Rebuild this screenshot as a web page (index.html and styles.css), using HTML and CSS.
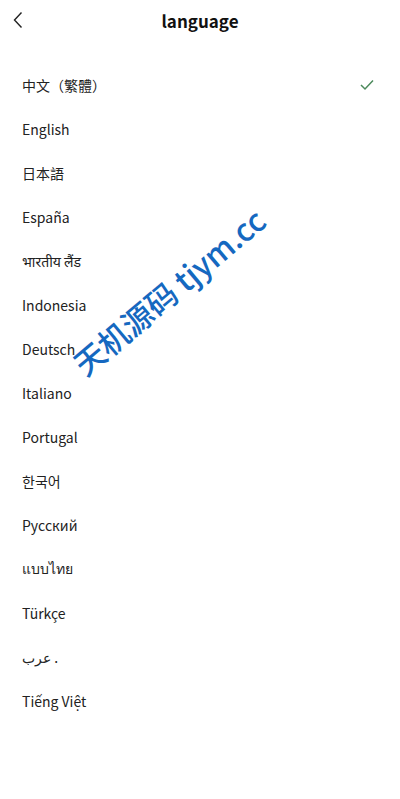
FILE: index.html
```html
<!DOCTYPE html>
<html lang="en">
<head>
    <meta charset="UTF-8">
    <meta name="viewport" content="width=device-width, initial-scale=1.0">
    <title>language</title>
    <link rel="stylesheet" href="styles.css">
</head>
<body>
    <div class="page">
        <div class="header">
            <span class="back">
                <svg width="12" height="18" viewBox="0 0 12 18"><path d="M9.5 1.5 L2.5 9 L9.5 16.5" fill="none" stroke="#222" stroke-width="1.4"/></svg>
            </span>
            <h2 class="title">language</h2>
        </div>

        <ul class="lang-list">
            <li class="lang-item active">
                <span>中文（繁體）</span>
                <svg class="check" width="14" height="12" viewBox="0 0 14 12"><path d="M1 6 L5 10 L13 1.5" fill="none" stroke="#4c8a5c" stroke-width="1.5"/></svg>
            </li>
            <li class="lang-item"><span>English</span></li>
            <li class="lang-item"><span>日本語</span></li>
            <li class="lang-item"><span>España</span></li>
            <li class="lang-item"><span>भारतीय लैंड</span></li>
            <li class="lang-item"><span>Indonesia</span></li>
            <li class="lang-item"><span>Deutsch</span></li>
            <li class="lang-item"><span>Italiano</span></li>
            <li class="lang-item"><span>Portugal</span></li>
            <li class="lang-item"><span>한국어</span></li>
            <li class="lang-item"><span>Русский</span></li>
            <li class="lang-item"><span>แบบไทย</span></li>
            <li class="lang-item"><span>Türkçe</span></li>
            <li class="lang-item"><span>عرب .</span></li>
            <li class="lang-item"><span>Tiếng Việt</span></li>
        </ul>

        <div class="watermark">天机源码 tjym.cc</div>
    </div>
</body>
</html>
```

FILE: styles.css
```css
/* page */
body {
    margin: 0;
    background-color: #fff;
    font-family: "Noto Sans CJK SC", "Noto Sans", sans-serif;
    color: #222;
}

.page {
    position: relative;
    min-height: 799px;
}

.header {
    height: 40px;
    padding-bottom: 4px;
    display: flex;
    align-items: center;
    justify-content: center;
    position: relative;
}

.back {
    position: absolute;
    left: 12px;
    top: 11px;
    display: flex;
}

.title {
    margin: 0;
    font-size: 17px;
    font-weight: 700;
    color: #111;
}

.lang-list {
    list-style: none;
    margin: 0;
    padding: 19px 0 0;
}

.lang-item {
    height: 44px;
    display: flex;
    align-items: center;
    justify-content: space-between;
    padding: 0 26px 0 22px;
    font-size: 14px;
    color: #222;
}

.check {
    display: block;
}

.watermark {
    position: absolute;
    left: 77px;
    top: 345px;
    font-size: 31px;
    font-weight: 500;
    color: #1568c0;
    white-space: nowrap;
    transform: rotate(-40deg);
    transform-origin: left center;
}
```
